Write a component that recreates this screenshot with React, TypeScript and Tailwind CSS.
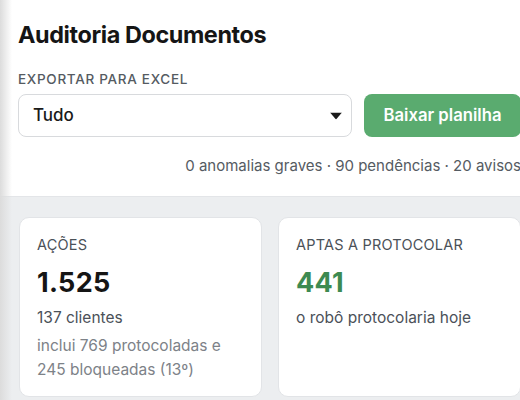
import { useState } from 'react';

export default function App() {
  const [filtro, setFiltro] = useState('Tudo');

  return (
    <div className="relative w-[520px] h-[400px] overflow-hidden bg-[#eceef0]" style={{ fontFamily: 'Inter, "Noto Sans", sans-serif' }}>
      {/* left edge shade */}
      <div className="absolute inset-y-0 left-0 w-3 bg-gradient-to-r from-[#dcdcdc] to-transparent pointer-events-none z-10" />

      <div className="w-[539px]">
        <section className="bg-white px-[18px] pt-[20px] pb-[20px] border-b border-[#e3e5e8]">
          <h1 className="text-[23.4px] font-bold tracking-[-0.4px] text-[#151515] leading-[30px]">Auditoria Documentos</h1>

          <p className="mt-[21px] text-[13.5px] font-medium tracking-[0.7px] text-[#555b62] leading-[16px]">EXPORTAR PARA EXCEL</p>

          <div className="mt-[7px] flex gap-3">
            <div className="relative flex-1">
              <select
                value={filtro}
                onChange={(e) => setFiltro(e.target.value)}
                className="w-full h-[43px] appearance-none rounded-lg border border-[#d8dadd] bg-white pl-[14px] pr-10 text-[17px] font-medium text-[#1a1a1a] outline-none"
              >
                <option>Tudo</option>
                <option>Anomalias graves</option>
                <option>Pendências</option>
                <option>Avisos</option>
              </select>
              <svg className="absolute right-[10px] top-1/2 -translate-y-1/2 pointer-events-none" width="12" height="7" viewBox="0 0 12 7">
                <path d="M0 0 L12 0 L6 7 Z" fill="#1a1a1a" />
              </svg>
            </div>
            <button className="w-[157px] h-[43px] rounded-lg bg-[#5aab6f] text-white text-[16.7px] font-semibold">
              Baixar planilha
            </button>
          </div>

          <p className="mt-[19px] text-right text-[15px] text-[#555b62] leading-[20px]">
            0 anomalias graves · 90 pendências · 20 avisos
          </p>
        </section>

        <div className="grid grid-cols-2 gap-4 pl-[19px] pr-[18px] pt-[20px]">
          <div className="h-[180px] rounded-[10px] border border-[#e2e4e7] bg-white px-[17px] pt-[16px]">
            <p className="text-[14.5px] tracking-[0.2px] text-[#4b5158] leading-[22px]">AÇÕES</p>
            <p className="mt-[10px] text-[27px] font-bold text-[#151515] leading-[34px] tracking-[0.3px]">1.525</p>
            <p className="mt-[7px] text-[15.5px] text-[#4b5158] leading-[22px]">137 clientes</p>
            <p className="mt-[5px] text-[15.5px] text-[#7d8288] leading-[24px]">
              inclui 769 protocoladas e<br />245 bloqueadas (13º)
            </p>
          </div>
          <div className="h-[180px] rounded-[10px] border border-[#e2e4e7] bg-white px-[17px] pt-[16px]">
            <p className="text-[14.5px] tracking-[0.2px] text-[#4b5158] leading-[22px]">APTAS A PROTOCOLAR</p>
            <p className="mt-[10px] text-[27px] font-bold text-[#3d8a51] leading-[34px] tracking-[0.3px]">441</p>
            <p className="mt-[7px] text-[15.5px] text-[#4b5158] leading-[22px]">o robô protocolaria hoje</p>
          </div>
        </div>
      </div>
    </div>
  );
}
